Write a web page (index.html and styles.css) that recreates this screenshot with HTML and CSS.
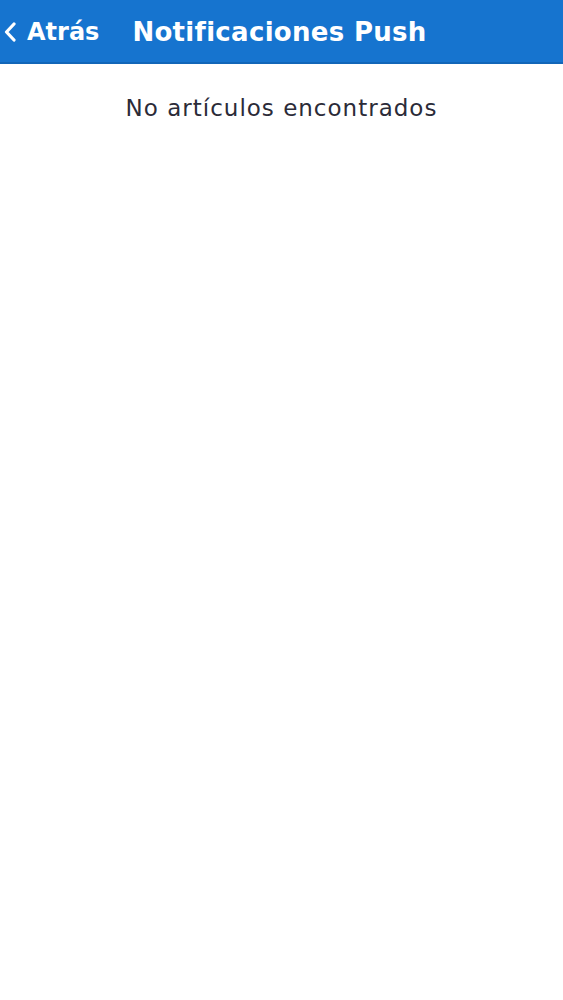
FILE: index.html
```html
<!DOCTYPE html>
<html>
  <head>
    <link rel="stylesheet" href="styles.css">
  </head>
  <body>
    <header class="navbar">
      <a class="back" href="#">
        <svg class="back-icon" viewBox="0 0 14 20" width="14" height="20">
          <path d="M11 2 L3.5 10 L11 18" fill="none" stroke="#fff" stroke-width="3.2" stroke-linecap="round" stroke-linejoin="round"/>
        </svg>
        <span>Atrás</span>
      </a>
      <h1 class="title">Notificaciones Push</h1>
    </header>
    <main class="content">
      <p class="empty">No artículos encontrados</p>
    </main>
  </body>
</html>
```

FILE: styles.css
```css
body {
  margin: 0;
  font-family: "DejaVu Sans", Verdana, sans-serif;
  background: #fff;
}
.navbar {
  display: flex;
  align-items: center;
  height: 64px;
  padding-top: 2px;
  box-sizing: border-box;
  background-color: #1674cf;
  border-bottom: 2px solid #1266b8;
  color: #fff;
}
.back {
  display: flex;
  align-items: center;
  gap: 10px;
  padding-left: 3px;
  color: #fff;
  text-decoration: none;
  font-size: 24px;
  font-weight: bold;
}
.title {
  margin: 0 0 0 33px;
  font-size: 26px;
  font-weight: bold;
  letter-spacing: 0.3px;
}
.content {
  padding-top: 31px;
}
.empty {
  margin: 0;
  text-align: center;
  font-size: 23px;
  letter-spacing: 1px;
  color: #2b2b38;
}
```
